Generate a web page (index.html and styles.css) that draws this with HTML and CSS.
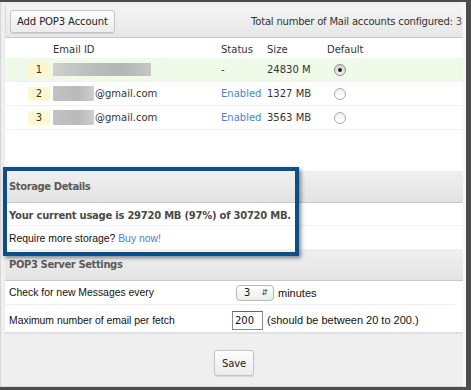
FILE: index.html
```html
<!DOCTYPE html>
<html lang="en">
<head>
    <meta charset="UTF-8">
    <title>Mail Accounts</title>
    <link rel="stylesheet" href="styles.css">
</head>
<body>
    <div class="frame">
        <div class="toolbar">
            <button class="btn">Add POP3 Account</button>
            <span class="total">Total number of Mail accounts configured: <span class="count">3</span></span>
        </div>

        <div class="panel">
            <div class="row head">
                <span></span>
                <span>Email ID</span>
                <span>Status</span>
                <span>Size</span>
                <span>Default</span>
            </div>
            <div class="row current">
                <span class="num">1</span>
                <span class="email"><span class="blur wide"></span></span>
                <span>-</span>
                <span>24830 M</span>
                <span><span class="radio on"></span></span>
            </div>
            <div class="row">
                <span class="num">2</span>
                <span class="email"><span class="blur"></span>@gmail.com</span>
                <span class="link">Enabled</span>
                <span>1327 MB</span>
                <span><span class="radio"></span></span>
            </div>
            <div class="row">
                <span class="num">3</span>
                <span class="email"><span class="blur"></span>@gmail.com</span>
                <span class="link">Enabled</span>
                <span>3563 MB</span>
                <span><span class="radio"></span></span>
            </div>

            <div class="section storage">
                <div class="section-title">Storage Details</div>
                <div class="line bold">Your current usage is 29720 MB (97%) of 30720 MB.</div>
                <div class="line plain">Require more storage? <span class="link">Buy now!</span></div>
            </div>

            <div class="section">
                <div class="section-title">POP3 Server Settings</div>
                <div class="setting">
                    <span class="plain">Check for new Messages every</span>
                    <span class="control"><span class="select">3<span class="arrows">&#8693;</span></span> minutes</span>
                </div>
                <div class="setting last">
                    <span class="plain">Maximum number of email per fetch</span>
                    <span class="control"><span class="field">200</span> (should be between 20 to 200.)</span>
                </div>
            </div>

            <div class="highlight"></div>
        </div>

        <div class="footer">
            <button class="btn">Save</button>
        </div>
    </div>
</body>
</html>
```

FILE: styles.css
```css
* {
    margin: 0;
    padding: 0;
    box-sizing: border-box;
}

body {
    background: #4c4c4c;
    font-family: "DejaVu Sans", Verdana, sans-serif;
    font-size: 10px;
    color: #333;
}

.frame {
    width: 466px;
    height: 385px;
    margin-top: 2px;
    background: #efefef;
    border-left: 1px solid #d6d6d6;
    border-right: 3px solid #f7f7f7;
    border-bottom: 1px solid #d8d8d8;
    padding-top: 3px;
    display: flex;
    flex-direction: column;
}

.toolbar {
    margin-left: 4px;
    height: 33px;
    display: flex;
    align-items: center;
    justify-content: space-between;
    padding: 0 1px 0 4px;
    background: linear-gradient(#f4f4f4, #e7e7e7);
    border-left: 1px solid #dcdcdc;
    border-bottom: 1px solid #c9c9c9;
}

.btn {
    font-family: "DejaVu Sans", Verdana, sans-serif;
    font-size: 10px;
    color: #222;
    height: 23px;
    padding: 0 6px;
    letter-spacing: -0.1px;
    border: 1px solid #c4c4c4;
    border-radius: 3px;
    background: linear-gradient(#fdfdfd, #ececec);
    box-shadow: 0 1px 1px rgba(0, 0, 0, 0.1);
}

.total {
    letter-spacing: -0.2px;
}

.total .count {
    color: #555;
}

.panel {
    position: relative;
    margin-left: 4px;
    background: #fff;
    border-bottom: 1px solid #dedede;
}

.row {
    display: grid;
    grid-template-columns: 25px 168px 46px 60px 1fr;
    align-items: center;
    height: 24px;
    padding-left: 23px;
    border-bottom: 1px solid #eef0f7;
}

.row.head {
    height: 20px;
    padding-top: 2px;
    border-bottom: none;
}

.row.current {
    background: #effbe8;
}

.num {
    width: 22px;
    height: 14px;
    line-height: 14px;
    text-align: center;
    background: #fff7cf;
}

.email {
    display: flex;
    align-items: center;
}

.blur {
    display: inline-block;
    width: 41px;
    height: 15px;
    margin-right: 1px;
    background: linear-gradient(90deg, #c3c3c3, #b9b9b9 60%, #cfcfcf);
}

.blur.wide {
    width: 98px;
    height: 13px;
    background: linear-gradient(90deg, #cfcfcf, #bdbdbd 40%, #b5b5b5 70%, #c6c6c6);
}

.link {
    color: #4a7fd4;
}

.radio {
    display: block;
    width: 12px;
    height: 12px;
    margin-left: 7px;
    border-radius: 50%;
    border: 1px solid #a8a8a8;
    background: linear-gradient(#f0f0f0, #ffffff);
    position: relative;
}

.radio.on {
    border-color: #8a8a8a;
    background: linear-gradient(#d2d2d2, #f2f2f2);
}

.radio.on::after {
    content: "";
    position: absolute;
    left: 3px;
    top: 3px;
    width: 4px;
    height: 4px;
    border-radius: 50%;
    background: #222;
}

.storage {
    margin-top: 41px;
}

.section-title {
    height: 32px;
    line-height: 32px;
    padding-left: 4px;
    font-weight: bold;
    letter-spacing: -0.4px;
    color: #5a5a5a;
    background: linear-gradient(#f0f0f0, #e3e3e3);
    border-bottom: 1px solid #c8c8c8;
}

.line {
    height: 23px;
    line-height: 21px;
    padding: 2px 0 0 4px;
    border-bottom: 1px solid #f0f1f7;
}

.bold {
    font-weight: bold;
    letter-spacing: -0.25px;
    color: #4a4a4a;
}

.line.plain {
    border-bottom: none;
    color: #111;
}

.plain {
    font-family: "Liberation Sans", Arial, sans-serif;
    font-size: 10.4px;
}

.setting {
    display: grid;
    grid-template-columns: 223px 1fr;
    align-items: center;
    height: 24px;
    padding-left: 4px;
    margin-right: 8px;
    border-bottom: 1px solid #eef0f7;
    color: #111;
}

.setting.last {
    height: 27px;
    padding-top: 3px;
    border-bottom: none;
}

.control {
    display: flex;
    align-items: center;
    gap: 4px;
    font-family: "Liberation Sans", Arial, sans-serif;
    font-size: 11px;
}

.select {
    display: flex;
    justify-content: space-between;
    align-items: center;
    width: 38px;
    height: 16px;
    margin-left: 4px;
    padding: 0 5px 0 7px;
    border: 1px solid #b8b8b8;
    border-radius: 4px;
    background: linear-gradient(#ffffff, #ececec);
    font-family: "DejaVu Sans", Verdana, sans-serif;
    font-size: 10px;
}

.arrows {
    font-size: 8px;
    color: #444;
}

.field {
    display: block;
    width: 31px;
    height: 19px;
    line-height: 17px;
    padding-left: 2px;
    border: 1px solid #8a8a8a;
    border-top-color: #666;
    font-family: "DejaVu Sans", Verdana, sans-serif;
    font-size: 10px;
}

.highlight {
    position: absolute;
    left: -2px;
    top: 129px;
    width: 296px;
    height: 89px;
    border: 4px solid #0c4e8a;
    box-shadow: 2px 2px 4px rgba(0, 0, 0, 0.45);
}

.footer {
    flex: 1;
    display: flex;
    justify-content: center;
    padding-top: 16px;
    margin-left: 4px;
    border-top: 1px solid #e2e2e2;
}

.footer .btn {
    height: 26px;
    padding: 0 7px;
}
```
